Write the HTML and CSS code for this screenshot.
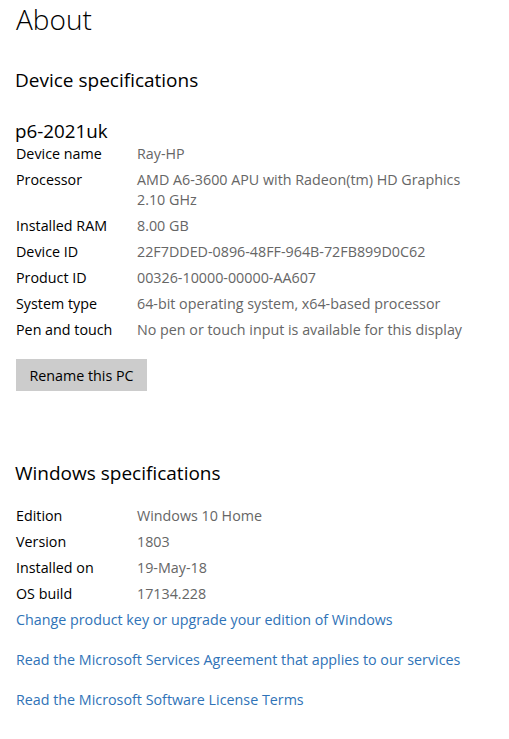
FILE: index.html
```html
<!DOCTYPE html>
<html lang="en">
<head>
<meta charset="utf-8">
<title>About</title>
<link rel="stylesheet" href="styles.css">
</head>
<body>
<main class="page">
  <h1 class="title">About</h1>
  <h2 class="section-title">Device specifications</h2>
  <div class="pc-name">p6-2021uk</div>
  <dl class="specs">
    <dt>Device name</dt><dd>Ray-HP</dd>
    <dt>Processor</dt><dd>AMD A6-3600 APU with Radeon(tm) HD Graphics 2.10 GHz</dd>
    <dt>Installed RAM</dt><dd>8.00 GB</dd>
    <dt>Device ID</dt><dd>22F7DDED-0896-48FF-964B-72FB899D0C62</dd>
    <dt>Product ID</dt><dd>00326-10000-00000-AA607</dd>
    <dt>System type</dt><dd>64-bit operating system, x64-based processor</dd>
    <dt>Pen and touch</dt><dd>No pen or touch input is available for this display</dd>
  </dl>
  <button class="btn" type="button">Rename this PC</button>

  <h2 class="section-title win-title">Windows specifications</h2>
  <dl class="specs win-specs">
    <dt>Edition</dt><dd>Windows 10 Home</dd>
    <dt>Version</dt><dd>1803</dd>
    <dt>Installed on</dt><dd>19-May-18</dd>
    <dt>OS build</dt><dd>17134.228</dd>
  </dl>
  <nav class="links">
    <a href="#">Change product key or upgrade your edition of Windows</a>
    <a href="#">Read the Microsoft Services Agreement that applies to our services</a>
    <a href="#">Read the Microsoft Software License Terms</a>
  </nav>
</main>
</body>
</html>
```

FILE: styles.css
```css
html, body {
  margin: 0;
  padding: 0;
  background: #ffffff;
}

body {
  font-family: "Open Sans", "Noto Sans", "Liberation Sans", sans-serif;
  color: #000;
  font-size: 14.3px;
}

.page {
  padding: 1px 0 0 16px;
  width: 462px;
}

.title {
  margin: 0;
  font-size: 28px;
  font-weight: 300;
  line-height: 36px;
}

.section-title {
  margin: 29px 0 0 -1px;
  font-size: 19px;
  font-weight: 400;
  line-height: 28px;
}

.pc-name {
  margin-top: 25px;
  font-size: 18.8px;
  line-height: 24px;
  margin-left: -1px;
}

.specs {
  display: grid;
  grid-template-columns: 121px 1fr;
  row-gap: 6px;
  margin: 1px 0 0 0;
  line-height: 20px;
}

.specs dt, .specs dd {
  margin: 0;
}

.specs dd {
  color: #666666;
}

.btn {
  display: block;
  margin-top: 19px;
  height: 32px;
  width: 131px;
  padding: 0;
  border: 0;
  background: #cccccc;
  font: inherit;
  color: #000;
  text-align: center;
}

.win-title {
  margin-top: 68px;
}

.win-specs {
  margin-top: 19px;
}

.links {
  display: flex;
  flex-direction: column;
  gap: 20px;
  margin-top: 6px;
  line-height: 20px;
}

.links a {
  color: #2f73b7;
  text-decoration: none;
  align-self: flex-start;
}
```
